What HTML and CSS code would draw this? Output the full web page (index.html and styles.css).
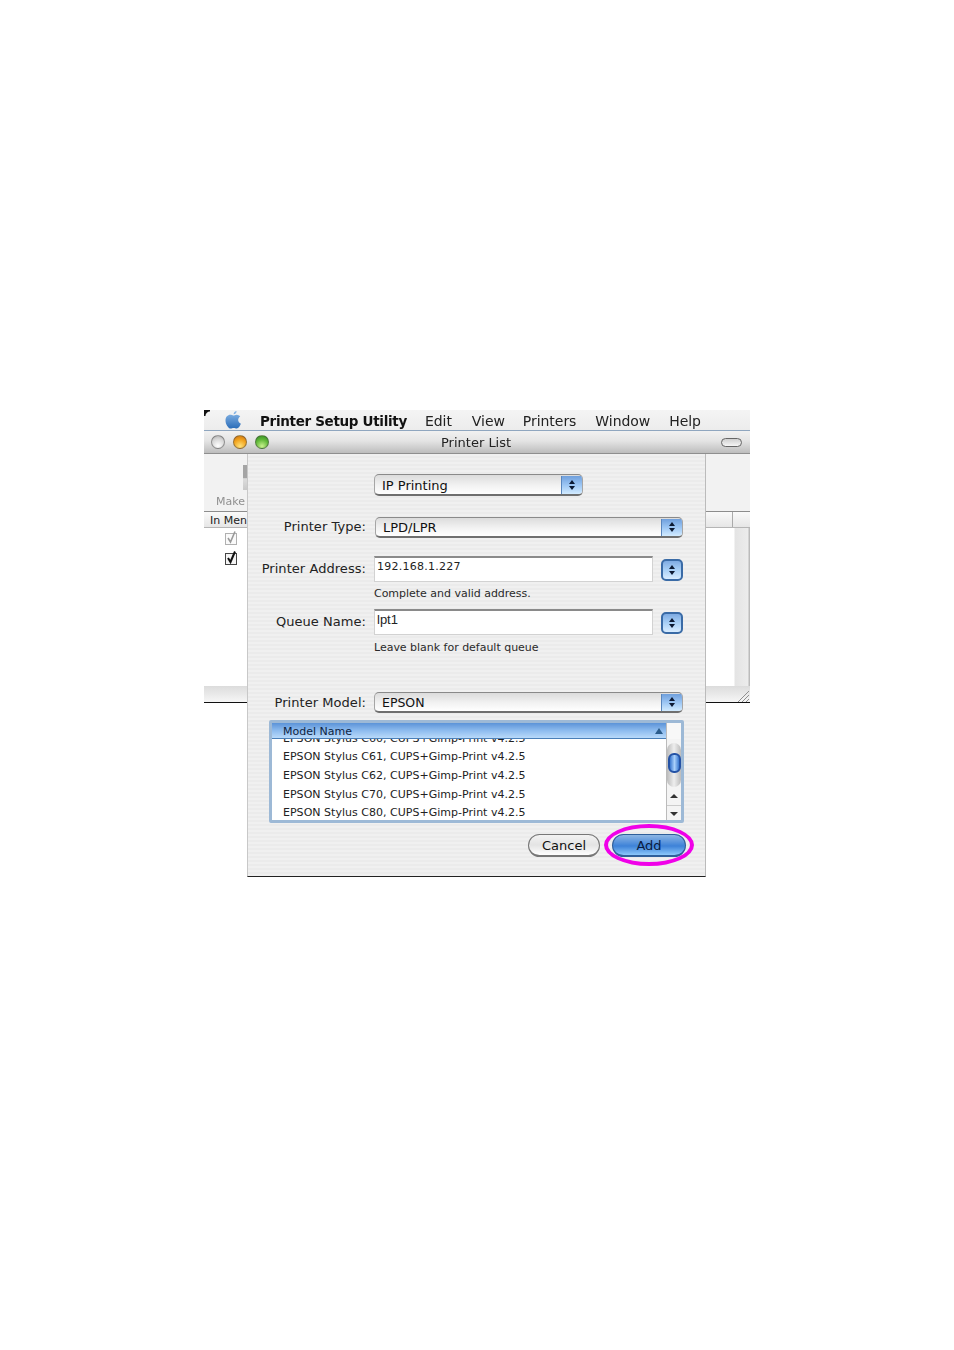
FILE: index.html
```html
<!DOCTYPE html>
<html lang="en">
<head>
<meta charset="utf-8">
<title>Printer Setup Utility</title>
<link rel="stylesheet" href="styles.css">
</head>
<body>
<main class="shot">
  <div class="window">
    <nav class="menubar">
      <svg class="apple" viewBox="0 0 18 20" width="18" height="20"><defs><linearGradient id="ag" x1="0" y1="0" x2="0" y2="1"><stop offset="0" stop-color="#8fbcea"/><stop offset="1" stop-color="#2a6cb8"/></linearGradient></defs><path fill="url(#ag)" d="M12.600 1c.1 1.500-1.200 3.300-3 3.300C9.500 2.700 11 1.200 12.600 1zM9.300 5.500c.9 0 1.900-.8 3.400-.8 1.300 0 2.700.7 3.500 1.900-3 1.800-2.500 5.900.7 7.200-.8 2-2.400 4.800-4.200 4.800-1.100 0-1.700-.7-3-.7s-2 .7-3 .7C4.500 18.600 1.500 14.500 1.500 10.500c0-3.500 2.300-5.700 4.700-5.700 1.300 0 2.300.7 3.100.7z"/></svg>
      <span class="menu-app">Printer Setup Utility</span>
      <span class="menu-item m-edit">Edit</span>
      <span class="menu-item m-view">View</span>
      <span class="menu-item m-printers">Printers</span>
      <span class="menu-item m-window">Window</span>
      <span class="menu-item m-help">Help</span>
    </nav>
    <header class="titlebar">
      <i class="light l-close"></i><i class="light l-min"></i><i class="light l-zoom"></i>
      <span class="title">Printer List</span>
      <i class="pill"></i>
    </header>
    <div class="toolbar"><i class="tool-icon"></i><span class="make">Make</span></div>
    <div class="tablehead"><span>In Men</span><i class="col-sep"></i></div>
    <div class="tablebody">
      <svg class="check" viewBox="0 0 14 16" width="14" height="16"><rect x="1.500" y="3.500" width="11" height="11" fill="#fafafa" stroke="#b0b0b0"/><path d="M4 8l2.500 4L11 1.500" fill="none" stroke="#9a9a9a" stroke-width="1.600"/></svg>
      <svg class="check" viewBox="0 0 14 16" width="14" height="16"><rect x="1.500" y="3.500" width="11" height="11" fill="#f4f4f4" stroke="#444"/><path d="M4 8l2.500 4L11 1.500" fill="none" stroke="#111" stroke-width="2"/></svg>
    </div>
    <div class="statusbar">
      <svg class="grip" viewBox="0 0 12 12" width="12" height="12"><path d="M1 12 12 1M5 12l7-7M9 12l3-3" stroke="#8f8f8f" fill="none"/></svg>
    </div>
  </div>

  <section class="dialog">
    <div class="row r-ip">
      <div class="popup p-ip"><span>IP Printing</span><b class="arrows"><i class="up"></i><i class="down"></i></b></div>
    </div>
    <div class="row r-type">
      <label>Printer Type:</label>
      <div class="popup p-wide"><span>LPD/LPR</span><b class="arrows"><i class="up"></i><i class="down"></i></b></div>
    </div>
    <div class="row r-address">
      <label>Printer Address:</label>
      <div class="field">192.168.1.227</div>
      <b class="stepper"><i class="up"></i><i class="down"></i></b>
    </div>
    <p class="hint h-address">Complete and valid address.</p>
    <div class="row r-queue">
      <label>Queue Name:</label>
      <div class="field f-queue">lpt1</div>
      <b class="stepper"><i class="up"></i><i class="down"></i></b>
    </div>
    <p class="hint h-queue">Leave blank for default queue</p>
    <div class="row r-model">
      <label>Printer Model:</label>
      <div class="popup p-model"><span>EPSON</span><b class="arrows"><i class="up"></i><i class="down"></i></b></div>
    </div>
    <div class="list">
      <div class="list-main">
        <div class="list-head"><span>Model Name</span><i class="sort"></i></div>
        <div class="list-rows">
          <div class="list-row">EPSON Stylus C60, CUPS+Gimp-Print v4.2.5</div>
          <div class="list-row">EPSON Stylus C61, CUPS+Gimp-Print v4.2.5</div>
          <div class="list-row">EPSON Stylus C62, CUPS+Gimp-Print v4.2.5</div>
          <div class="list-row">EPSON Stylus C70, CUPS+Gimp-Print v4.2.5</div>
          <div class="list-row">EPSON Stylus C80, CUPS+Gimp-Print v4.2.5</div>
        </div>
      </div>
      <div class="scroll">
        <div class="scroll-corner"></div>
        <div class="scroll-track"><i class="thumb"></i></div>
        <div class="scroll-btn"><i class="up dark"></i></div>
        <div class="scroll-btn sb-down"><i class="down dark"></i></div>
      </div>
    </div>
    <div class="actions">
      <button class="btn">Cancel</button>
      <button class="btn btn-add">Add</button>
    </div>
    <i class="ring"></i>
  </section>
</main>
</body>
</html>
```
FILE: styles.css
```css
* { box-sizing: border-box; }
html, body { margin: 0; background: #fff; }
body { width: 954px; height: 1350px; padding: 410px 0 0 204px; font-family: "DejaVu Sans", sans-serif; color: #222; overflow: hidden; }
i, b { display: block; font-style: normal; }

.shot { position: relative; width: 546px; height: 467px; filter: blur(0.5px); }

.window { width: 546px; height: 293px; display: flex; flex-direction: column; border-bottom: 1px solid #111; }

.menubar { height: 21px; flex: none; position: relative; display: flex; align-items: center; padding: 2px 0 0 20px; font-size: 14px; background: linear-gradient(#f4f4f4, #ececec); border-bottom: 1px solid #8fa6bf; }
.menubar::before { content: ""; position: absolute; left: 0; top: 0; width: 6px; height: 6px; background: radial-gradient(circle at 100% 100%, transparent 4px, #111 5px); }
.apple { flex: none; margin: -2px 18px 0 0; }
.menu-app { font-weight: 700; font-size: 13.500px; letter-spacing: -0.32px; color: #111; }
.menu-item { color: #222; font-size: 14px; letter-spacing: -0.05px; }
.m-edit { margin-left: 18px; }
.m-view { margin-left: 20px; }
.m-printers { margin-left: 18px; }
.m-window { margin-left: 19px; }
.m-help { margin-left: 19px; }

.titlebar { height: 23px; flex: none; position: relative; display: flex; align-items: center; padding-left: 7px; background: linear-gradient(#f1f1f1, #e4e4e4 45%, #bdbdbd); border-bottom: 1px solid #8f8f8f; }
.light { width: 14px; height: 14px; border-radius: 50%; margin-right: 8px; flex: none; border: 1px solid rgba(70,70,70,.5); }
.l-close { background: radial-gradient(circle at 50% 80%, #fff, #d6d6d6 60%, #a9a9a9); }
.l-min { background: radial-gradient(circle at 50% 85%, #ffe27a, #f2a41f 55%, #c8700f); }
.l-zoom { background: radial-gradient(circle at 50% 85%, #c9f28e, #62b93a 55%, #2f8a1f); }
.title { position: absolute; left: 237px; font-size: 13px; color: #222; }
.pill { position: absolute; left: 517px; top: 7px; width: 21px; height: 9px; border-radius: 5px; border: 1px solid #666; background: linear-gradient(#cfcfcf, #f6f6f6); }

.toolbar { height: 58px; flex: none; position: relative; background: #f2f2f2; border-bottom: 1px solid #8d8d8d; }
.tool-icon { position: absolute; left: 39px; top: 11px; width: 4px; height: 25px; background: linear-gradient(#a5a5a5 50%, #ddd 55%, #c8c8c8); }
.make { position: absolute; left: 12px; top: 41px; font-size: 11px; color: #909090; }

.tablehead { height: 16px; flex: none; position: relative; padding: 1px 0 0 6px; font-size: 11px; line-height: 15px; color: #222; background: linear-gradient(#fafafa, #e6e6e6); border-bottom: 1px solid #b5b5b5; }
.col-sep { position: absolute; left: 528px; top: 0; width: 1px; height: 15px; background: #aaa; }

.tablebody { flex: 1; background: linear-gradient(90deg, #fff 530px, #e4e4e4 531px, #ececec 544px, #bbb 545px); display: flex; flex-direction: column; align-items: flex-start; padding: 2px 0 0 20px; gap: 4px; }
.check { flex: none; }

.statusbar { height: 16px; flex: none; position: relative; background: linear-gradient(#dcdcdc, #f6f6f6); }
.grip { position: absolute; right: 1px; bottom: 0; }

.dialog { position: absolute; left: 43px; top: 44px; width: 459px; height: 423px; padding-top: 20px; background: repeating-linear-gradient(#f0f0f0 0 2px, #ebebeb 2px 4px); border-left: 1px solid #c8c8c8; border-right: 1px solid #bbb; border-bottom: 1px solid #222; font-size: 12px; color: #222; }

.row { display: flex; align-items: center; padding-left: 126px; position: relative; }
.row label { position: absolute; right: 339px; font-size: 13px; letter-spacing: .05px; color: #222; white-space: nowrap; }
.r-ip { height: 22px; }
.r-type { height: 21px; margin-top: 21px; padding-left: 127px; }
.r-type label { top: 2px; }
.r-address { height: 26px; margin-top: 18px; }
.r-queue { height: 26px; margin-top: 9px; }
.r-model { height: 21px; margin-top: 38px; }
.r-model label { top: 3px; }
.r-address label { top: 5px; }
.r-queue label { top: 5px; }

.popup { height: 100%; display: flex; align-items: center; justify-content: space-between; padding: 1px 0 0 7px; border: 1px solid #a5a5a5; border-top-color: #8a8a8a; border-bottom: 2px solid #6f6f6f; border-radius: 5px; font-size: 13px; color: #111; background: linear-gradient(#dcdcdc, #f2f2f2 55%, #fff); overflow: hidden; }
.p-ip { width: 209px; }
.p-wide { width: 308px; }
.p-model { width: 309px; }
.p-model span { font-size: 12.500px; }
.arrows { width: 21px; height: 100%; margin-top: -1px; display: flex; flex-direction: column; align-items: center; justify-content: center; gap: 2px; background: linear-gradient(#6f9fdc, #9cc6f4 50%, #d2ebff); border-left: 1px solid #5a86bd; }

.up, .down { width: 0; height: 0; border-left: 3px solid transparent; border-right: 3px solid transparent; }
.up { border-bottom: 4px solid #0c1a33; }
.down { border-top: 4px solid #0c1a33; }

.field { width: 279px; height: 100%; padding: 2px 0 0 2px; background: #fff; border: 1px solid #d2d2d2; border-top: 2px solid #8a8a8a; font-size: 11px; letter-spacing: .25px; color: #222; }
.f-queue { font-family: "Liberation Sans", sans-serif; font-size: 13px; letter-spacing: 0; padding-top: 1px; }
.stepper { width: 22px; height: 22px; margin: 2px 0 0 8px; border: 2px solid #3a6ba6; border-radius: 5px; display: flex; flex-direction: column; align-items: center; justify-content: center; gap: 2px; background: linear-gradient(#7fabe2, #a9d0f6 50%, #d8ecff); }

.hint { margin: 6px 0 0 126px; height: 12px; font-size: 11px; line-height: 12px; letter-spacing: -.02px; color: #2a2a2a; }
.h-queue { margin-top: 7px; }

.list { margin: 7px 0 0 21px; width: 415px; height: 103px; display: flex; border: 3px solid #9db9d6; border-radius: 2px; background: #fff; }
.list-main { width: 394px; flex: none; display: flex; flex-direction: column; }
.list-head { height: 16px; flex: none; position: relative; padding: 1px 0 0 11px; font-size: 11px; line-height: 16px; color: #0e1f42; background: linear-gradient(#5b93d8, #8dbbee 50%, #b9dafa); border-bottom: 1px solid #4a7fb8; z-index: 1; }
.sort { position: absolute; right: 3px; top: 5px; width: 0; height: 0; border-left: 4px solid transparent; border-right: 4px solid transparent; border-bottom: 6px solid #2c5d8c; }
.list-rows { flex: 1; min-height: 0; overflow: hidden; display: flex; flex-direction: column; justify-content: flex-end; }
.list-row { flex: none; height: 18.670px; line-height: 24px; padding-left: 11px; font-size: 11px; letter-spacing: .02px; color: #222; white-space: nowrap; }

.scroll { flex: 1; display: flex; flex-direction: column; border-left: 1px solid #bbb; background: #f4f4f4; }
.scroll-corner { height: 16px; background: #f8f8f8; flex: none; }
.scroll-track { height: 44px; margin-top: 4px; flex: none; display: flex; align-items: center; justify-content: center; background: linear-gradient(90deg, #bbb, #eee 50%, #bbb); border-radius: 7px; padding-bottom: 4px; }
.thumb { width: 13px; height: 20px; border-radius: 6px; border: 2px solid #2452a5; background: linear-gradient(90deg, #3a78d0, #a9d0fb 50%, #3a78d0); }
.scroll-btn { height: 16px; margin-top: 1px; flex: none; display: flex; align-items: center; justify-content: center; }
.scroll-btn .up, .scroll-btn .down { border-left-width: 4px; border-right-width: 4px; }
.sb-down { border-top: 1px solid #ccc; }
.dark { border-bottom-color: #333; border-top-color: #333; }

.actions { position: relative; display: flex; margin: 11px 0 0 280px; gap: 12px; }
.btn { width: 72px; height: 23px; padding: 1px 0 0; border: 1px solid #777; border-bottom-width: 2px; border-radius: 12px; font-family: inherit; font-size: 13px; color: #111; background: linear-gradient(#f2f2f2, #e4e4e4 50%, #fff); }
.btn-add { width: 74px; color: #0a1b3e; border-color: #2f5f9a; background: linear-gradient(#8db6e4, #3d82d8 55%, #8cc8fb); }

.ring { position: absolute; left: 356px; top: 370px; width: 90px; height: 42px; border: 4px solid #f000e8; border-radius: 50%; }
```
